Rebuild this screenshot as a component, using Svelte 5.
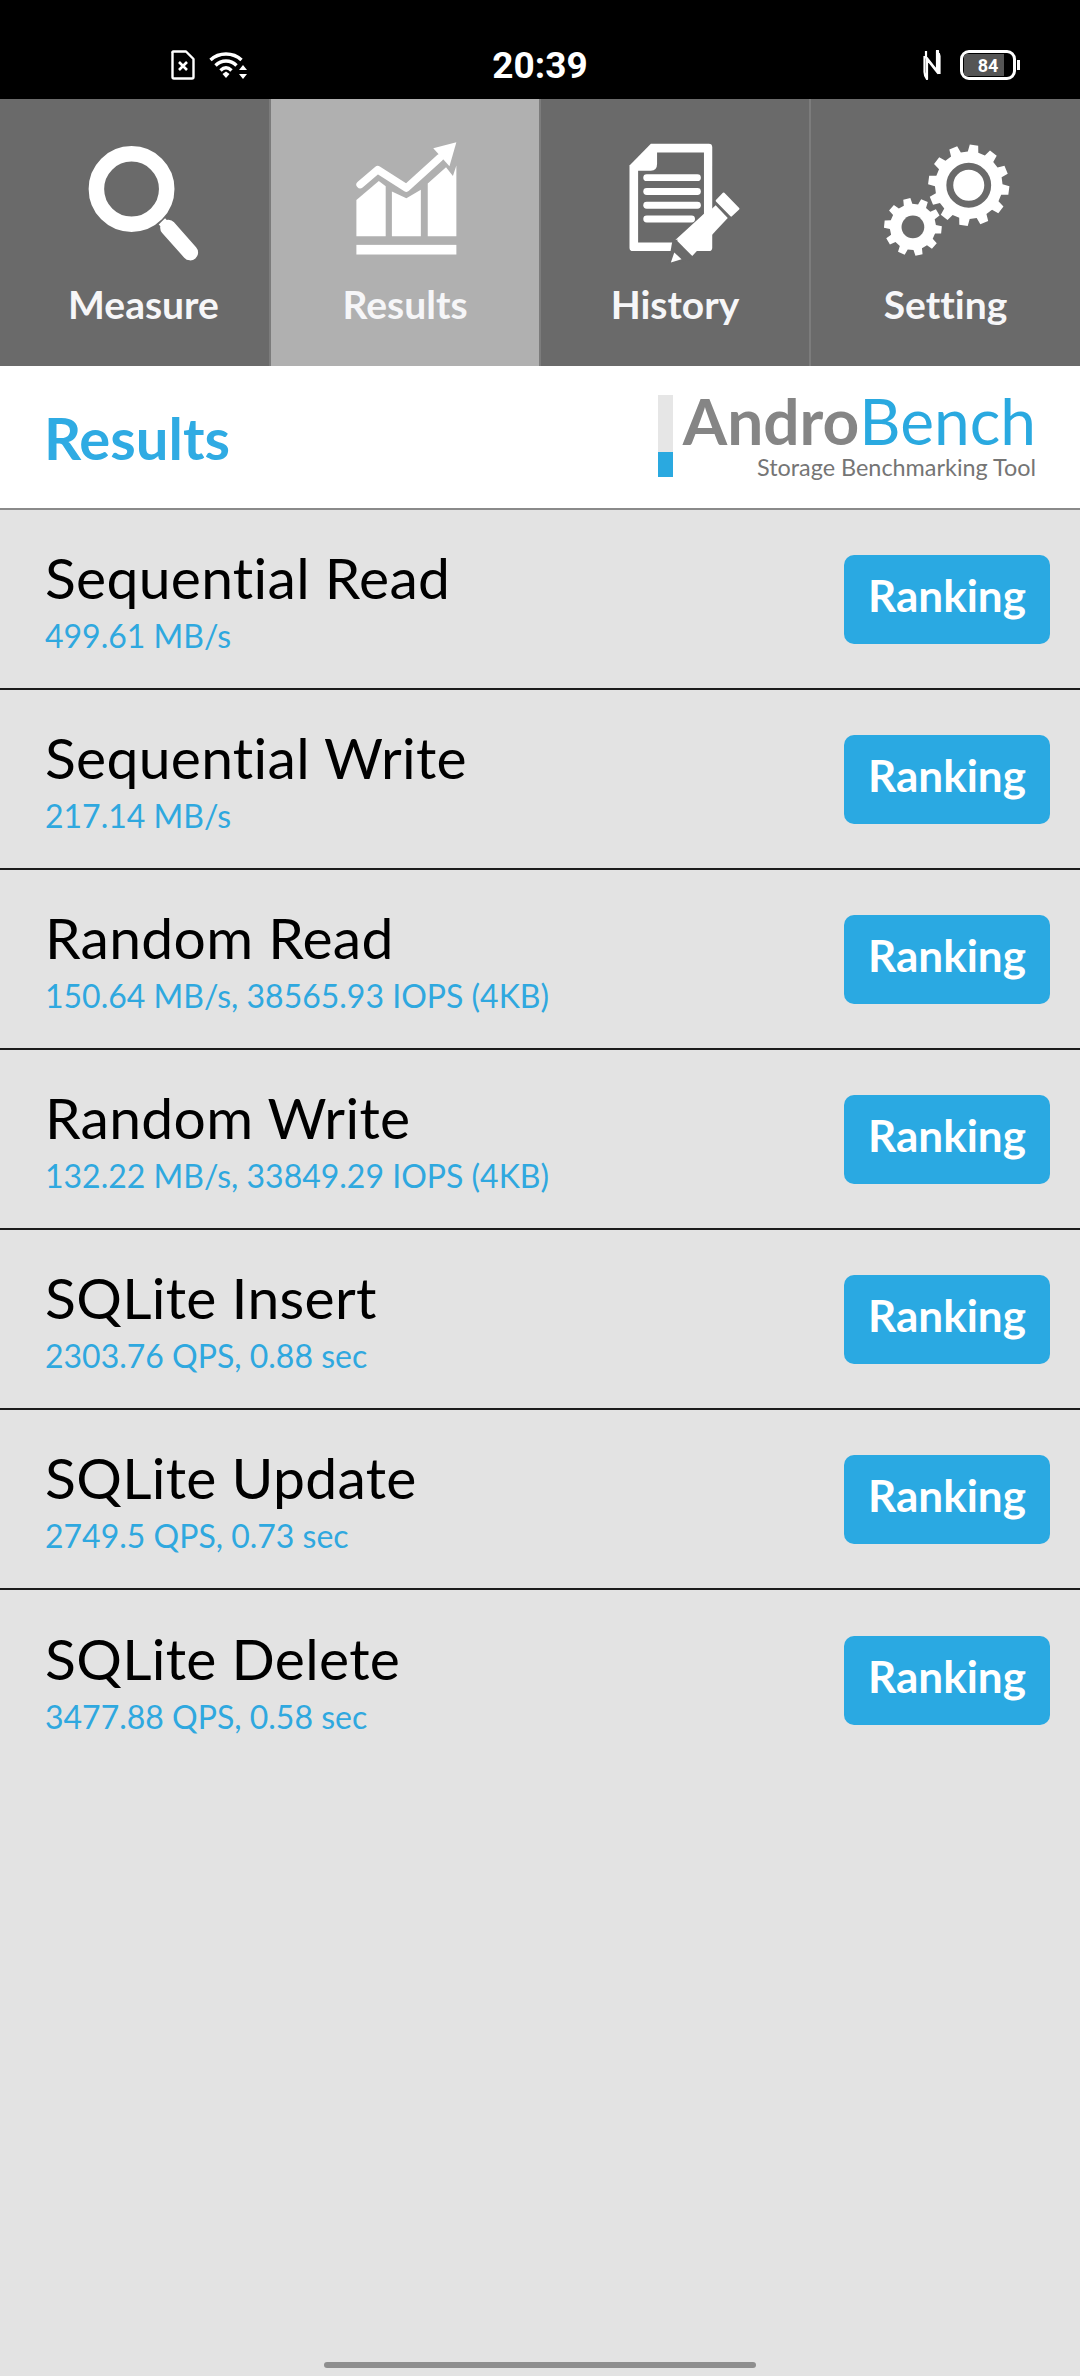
<script lang="ts">
	const rows = [
		{ name: 'Sequential Read', value: '499.61 MB/s' },
		{ name: 'Sequential Write', value: '217.14 MB/s' },
		{ name: 'Random Read', value: '150.64 MB/s, 38565.93 IOPS (4KB)' },
		{ name: 'Random Write', value: '132.22 MB/s, 33849.29 IOPS (4KB)' },
		{ name: 'SQLite Insert', value: '2303.76 QPS, 0.88 sec' },
		{ name: 'SQLite Update', value: '2749.5 QPS, 0.73 sec' },
		{ name: 'SQLite Delete', value: '3477.88 QPS, 0.58 sec' }
	];

	// cog outline, teeth as trapezoids round a root circle
	function gear(cx: number, cy: number, outer: number, root: number, teeth: number, phase = 0) {
		const step = (Math.PI * 2) / teeth;
		let d = '';
		for (let i = 0; i < teeth; i++) {
			const a = i * step + phase;
			const pts: [number, number][] = [
				[root, a - step * 0.3],
				[outer, a - step * 0.2],
				[outer, a + step * 0.2],
				[root, a + step * 0.3]
			];
			for (const [r, t] of pts) {
				d += `${d ? 'L' : 'M'}${(cx + r * Math.cos(t)).toFixed(1)} ${(cy + r * Math.sin(t)).toFixed(1)}`;
			}
		}
		return d + 'Z';
	}
</script>

<div class="screen">
	<div class="status">
		<div class="status-left">
			<svg class="sim" viewBox="0 0 24 30" width="24" height="30">
				<path d="M2.5 1.5H15L22.5 9V27a1.5 1.5 0 0 1-1.5 1.5H3A1.5 1.5 0 0 1 1.5 27V3a1 1 0 0 1 1-1.500Z" fill="none" stroke="#fff" stroke-width="2.4" stroke-linejoin="round" />
				<path d="M8 12l8 8M16 12l-8 8" stroke="#fff" stroke-width="2.6" />
			</svg>
			<svg class="wifi" viewBox="0 0 40 28" width="40" height="28">
				<path d="M1.500 9C10 1 24 1 32.500 9" fill="none" stroke="#fff" stroke-width="3.400" />
				<path d="M6.500 14.500C12.500 8.500 21.500 8.500 27.500 14.500" fill="none" stroke="#fff" stroke-width="3.400" />
				<path d="M11.500 19.500C15 16 19 16 22.500 19.500" fill="none" stroke="#fff" stroke-width="3.400" />
				<path d="M13.500 23L17 20.500L20.500 23L17 27Z" fill="#fff" />
				<path d="M34 14l4 5h-8ZM34 28l4-5h-8Z" fill="#fff" />
			</svg>
		</div>
		<div class="time">20:39</div>
		<div class="status-right">
			<svg class="nfc" viewBox="0 0 18 30" width="18" height="30">
				<path d="M1.500 6V22C1.500 25 2.500 27 4 29V9L15 23V1C14 1 14 1 13 1M16.500 24V6C16.500 4 15.500 2.500 14 1V21L3 7V1" fill="none" stroke="#fff" stroke-width="2.200" stroke-linejoin="round" />
			</svg>
			<div class="battery">
				<div class="battery-level"></div>
				<span class="battery-text">84</span>
			</div>
			<div class="battery-nub"></div>
		</div>
	</div>

	<nav class="tabs">
		<div class="tab first">
			<svg viewBox="192 130 400 380" width="138" height="131">
				<circle cx="382" cy="278" r="102" fill="none" stroke="#fff" stroke-width="45" />
				<path d="M488 390L552 462" stroke="#fff" stroke-width="46" stroke-linecap="round" />
				<path d="M470 372L490 392" stroke="#fff" stroke-width="26" />
			</svg>
			<span>Measure</span>
		</div>
		<div class="tab active">
			<svg viewBox="976 130 400 380" width="138" height="131">
				<path d="M1046 265L1097 222L1180 275L1276 188" fill="none" stroke="#fff" stroke-width="22" stroke-linecap="round" stroke-linejoin="round" />
				<path d="M1258 160L1325 142L1305 212Z" fill="#fff" />
				<path d="M1035 415V310L1100 255L1120 270V415Z" fill="#fff" />
				<path d="M1138 415V285L1180 305L1222 280V415Z" fill="#fff" />
				<path d="M1242 415V262L1295 215L1315 240L1325 210V415Z" fill="#fff" />
				<rect x="1035" y="440" width="290" height="28" fill="#fff" />
			</svg>
			<span>Results</span>
		</div>
		<div class="tab">
			<svg viewBox="192 130 400 380" width="138" height="131">
				<path d="M260 210L322 147H490Q500 147 500 157V448Q500 458 490 458H270Q260 458 260 448Z" fill="#fff" />
				<path d="M285 225H322Q340 225 340 205V172H476V350L385 433H285Z" fill="#6a6a6a" />
				<rect x="300" y="235" width="167" height="20" rx="10" fill="#fff" />
				<rect x="300" y="275" width="167" height="20" rx="10" fill="#fff" />
				<rect x="300" y="315" width="167" height="20" rx="10" fill="#fff" />
				<rect x="300" y="355" width="150" height="20" rx="10" fill="#fff" />
				<path d="M385 425H400L450 480L372 498Z" fill="#6a6a6a" />
				<path d="M398 428L510 325L545 362L442 472Z" fill="#fff" />
				<path d="M390 462L411 482L380 491Z" fill="#fff" />
				<path d="M533 291L576 335L555 355L513 312Z" fill="#fff" stroke="#fff" stroke-width="6" stroke-linejoin="round" />
			</svg>
			<span>History</span>
		</div>
		<div class="tab last">
			<svg viewBox="976 130 400 380" width="138" height="131">
				<path d={gear(1242, 267, 118, 98, 12, 0.13)} fill="#fff" />
				<circle cx="1242" cy="267" r="55" fill="none" stroke="#6a6a6a" stroke-width="20" />
				<path d={gear(1080, 388, 84, 67, 10, 0.1)} fill="#fff" />
				<circle cx="1080" cy="388" r="33" fill="#6a6a6a" />
			</svg>
			<span>Setting</span>
		</div>
	</nav>

	<header class="title-bar">
		<h1>Results</h1>
		<div class="logo">
			<div class="gauge"><div class="gauge-fill"></div></div>
			<div class="logo-text">
				<div class="brand"><b>Andro</b><span>Bench</span></div>
				<div class="tagline">Storage Benchmarking Tool</div>
			</div>
		</div>
	</header>

	<main class="list">
		{#each rows as row}
			<div class="row">
				<div class="row-text">
					<div class="row-name">{row.name}</div>
					<div class="row-value">{row.value}</div>
				</div>
				<button class="ranking">Ranking</button>
			</div>
		{/each}
	</main>

	<div class="home-bar"></div>
</div>

<style>
	:global(body) {
		margin: 0;
		background: #e3e3e3;
	}

	.screen {
		width: 1080px;
		height: 2376px;
		display: flex;
		flex-direction: column;
		overflow: hidden;
		background: #e3e3e3;
		font-family: Lato, "Open Sans", sans-serif;
		font-variant-ligatures: none;
	}

	.status {
		height: 99px;
		flex: none;
		background: #000;
		color: #fff;
		display: grid;
		grid-template-columns: 1fr auto 1fr;
		align-items: center;
		box-sizing: border-box;
		padding-top: 31px;
	}

	.status-left {
		display: flex;
		align-items: center;
		gap: 14px;
		padding-left: 171px;
	}

	.status-right {
		display: flex;
		align-items: center;
		justify-content: flex-end;
		padding-right: 60px;
	}

	.time {
		font-family: Roboto, sans-serif;
		font-weight: 700;
		font-size: 37px;
	}

	.nfc {
		margin-right: 19px;
	}

	.battery {
		position: relative;
		width: 56px;
		height: 30px;
		box-sizing: border-box;
		border: 3px solid #fff;
		border-radius: 9px;
		overflow: hidden;
		display: flex;
		align-items: center;
		justify-content: center;
	}

	.battery-level {
		position: absolute;
		left: 1px;
		top: 1px;
		bottom: 1px;
		width: 40px;
		background: #555;
	}

	.battery-text {
		position: relative;
		font-family: Roboto, sans-serif;
		font-weight: 700;
		font-size: 18px;
	}

	.battery-nub {
		width: 3px;
		height: 10px;
		margin-left: 1px;
		background: #fff;
	}

	.tabs {
		height: 267px;
		flex: none;
		display: grid;
		grid-template-columns: 271px 270px 270px 269px;
		background: #6a6a6a;
	}

	.tab {
		display: flex;
		flex-direction: column;
		align-items: center;
		box-sizing: border-box;
		padding-top: 39px;
		border-right: 2px solid #7c7c7c;
		color: #f6f6f8;
	}

	.tab.last {
		border-right: none;
	}

	.tab.active {
		background: #b0b0b0;
	}

	.tab span {
		margin-top: 10px;
		font-size: 39px;
		font-weight: 700;
		line-height: 50px;
	}

	/* the first label sits right of its icon's centre */
	.tab.first span {
		margin-left: 18px;
	}

	.title-bar {
		height: 144px;
		flex: none;
		display: flex;
		align-items: center;
		justify-content: space-between;
		box-sizing: border-box;
		padding: 0 44px 0 44px;
		background: #fff;
		border-bottom: 2px solid #8a8a8a;
	}

	h1 {
		margin: 0;
		font-size: 58px;
		font-weight: 700;
		color: #2fabe3;
	}

	.logo {
		display: flex;
		align-items: flex-start;
		gap: 10px;
	}

	.gauge {
		width: 15px;
		height: 82px;
		background: #e6e6e6;
		display: flex;
		align-items: flex-end;
	}

	.gauge-fill {
		width: 100%;
		height: 25px;
		background: #2aa9e0;
	}

	.logo-text {
		text-align: right;
		margin-top: -8px;
	}

	.brand {
		font-size: 64px;
		line-height: 68px;
		color: #2aa9e0;
		white-space: nowrap;
	}

	.brand b {
		color: #858585;
	}

	.tagline {
		font-size: 23.400px;
		line-height: 26px;
		margin-top: -1px;
		color: #757575;
	}

	.list {
		flex: 1;
	}

	.row {
		height: 180px;
		box-sizing: border-box;
		display: flex;
		align-items: center;
		justify-content: space-between;
		padding: 0 30px 0 45px;
		border-bottom: 2px solid #1c1c1c;
	}

	.row:last-child {
		border-bottom: none;
	}

	.row-name {
		font-size: 57px;
		line-height: 66px;
		letter-spacing: 0.3px;
		color: #000;
	}

	.row-value {
		margin-top: 7px;
		font-size: 32px;
		line-height: 38px;
		color: #2fa8df;
	}

	.ranking {
		width: 206px;
		height: 89px;
		border: none;
		border-radius: 10px;
		background: #2aa9e2;
		color: #fff;
		font-family: inherit;
		font-variant-ligatures: none;
		font-size: 44px;
		font-weight: 700;
		padding: 0 0 8px;
	}

	.home-bar {
		flex: none;
		width: 432px;
		height: 6px;
		margin: 0 auto 8px;
		border-radius: 3px;
		background: #8e8e8e;
	}
</style>
